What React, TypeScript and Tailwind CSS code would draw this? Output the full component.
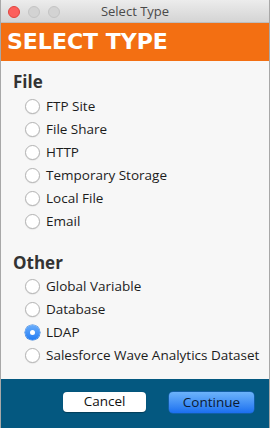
import { useState } from "react"

const fileTypes = ["FTP Site", "File Share", "HTTP", "Temporary Storage", "Local File", "Email"]
const otherTypes = ["Global Variable", "Database", "LDAP", "Salesforce Wave Analytics Dataset"]

function Radio({ label, checked, onSelect }: { label: string; checked: boolean; onSelect: () => void }) {
  return (
    <button onClick={onSelect} className="flex h-[23px] items-center pl-[24px] text-left">
      {checked ? (
        <span className="flex h-[15px] w-[15px] items-center justify-center rounded-full bg-gradient-to-b from-[#69adfb] to-[#1f7cf4] shadow-[0_0_0_0.5px_#2a78d8]">
          <span className="h-[5px] w-[5px] rounded-full bg-white" />
        </span>
      ) : (
        <span className="h-[15px] w-[15px] rounded-full border border-[#b4b4b4] bg-white shadow-[0_0.5px_1px_rgba(0,0,0,0.12)]" />
      )}
      <span className="ml-[6px] text-[13.5px] leading-none text-[#1c1c1c]">{label}</span>
    </button>
  )
}

export default function App() {
  const [selected, setSelected] = useState("LDAP")

  return (
    <div
      className="flex h-[428px] w-[270px] flex-col overflow-hidden border-x border-[#a8a8a8] bg-[#f7f7f7]"
      style={{ fontFamily: '"Open Sans", "Liberation Sans", sans-serif' }}
    >
      {/* title bar */}
      <div className="relative flex h-[23px] shrink-0 items-center justify-center border-b border-[#bdbdbd] bg-gradient-to-b from-[#ececec] to-[#d4d4d4]">
        <div className="absolute left-[7px] top-[6px] flex gap-[8px]">
          <span className="h-[12px] w-[12px] rounded-full border border-[#e0443e] bg-[#fc605c]" />
          <span className="h-[12px] w-[12px] rounded-full border border-[#c4c4c4] bg-[#d3d3d3]" />
          <span className="h-[12px] w-[12px] rounded-full border border-[#c4c4c4] bg-[#d3d3d3]" />
        </div>
        <span className="text-[13px] leading-none text-[#4a4a4a]">Select Type</span>
      </div>

      {/* header */}
      <div className="flex h-[38px] shrink-0 items-center bg-[#f36f12] pl-[6px]">
        <h1
          className="text-[22px] font-bold leading-none text-white"
          style={{ fontFamily: '"DejaVu Sans", Verdana, sans-serif' }}
        >
          SELECT TYPE
        </h1>
      </div>

      {/* options */}
      <div className="flex flex-1 flex-col pt-[10px]">
        <h2 className="mb-[3px] flex h-[21px] items-center pl-[12px] text-[17px] font-bold text-[#333]">File</h2>
        {fileTypes.map((t) => (
          <Radio key={t} label={t} checked={selected === t} onSelect={() => setSelected(t)} />
        ))}
        <h2 className="mb-[2px] mt-[19px] flex h-[21px] items-center pl-[12px] text-[17px] font-bold text-[#333]">Other</h2>
        {otherTypes.map((t) => (
          <Radio key={t} label={t} checked={selected === t} onSelect={() => setSelected(t)} />
        ))}
      </div>

      {/* footer */}
      <div className="flex h-[49px] shrink-0 justify-end gap-[23px] bg-[#045880] pr-[15px] pt-[13px]">
        <button className="h-[20px] w-[83px] rounded-[4px] bg-white text-[13.5px] leading-none text-[#111] shadow-[0_0.5px_1px_rgba(0,0,0,0.3)]">
          Cancel
        </button>
        <button className="h-[21px] w-[85px] rounded-[4px] bg-gradient-to-b from-[#6cb3fa] to-[#1a6ff0] text-[13.5px] leading-none text-[#0b1a33] shadow-[0_0_0_0.5px_#1f64c8]">
          Continue
        </button>
      </div>
    </div>
  )
}
